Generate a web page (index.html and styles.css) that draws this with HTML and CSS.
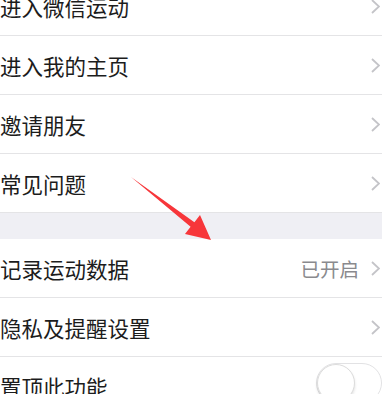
FILE: index.html
```html
<!DOCTYPE html>
<html>
<head>
<meta charset="utf-8">
<link rel="stylesheet" href="styles.css">
</head>
<body>
<div class="page">
<div class="group first">
<div class="row"><span class="label">进入微信运动</span><svg class="chevron" viewBox="0 0 9 15"><polyline points="1,1 8,7.5 1,14"/></svg></div>
<div class="row"><span class="label">进入我的主页</span><svg class="chevron" viewBox="0 0 9 15"><polyline points="1,1 8,7.5 1,14"/></svg></div>
<div class="row"><span class="label">邀请朋友</span><svg class="chevron" viewBox="0 0 9 15"><polyline points="1,1 8,7.5 1,14"/></svg></div>
<div class="row"><span class="label">常见问题</span><svg class="chevron" viewBox="0 0 9 15"><polyline points="1,1 8,7.5 1,14"/></svg></div>
</div>
<div class="gap"></div>
<div class="group">
<div class="row"><span class="label">记录运动数据</span><span class="value">已开启</span><svg class="chevron" viewBox="0 0 9 15"><polyline points="1,1 8,7.5 1,14"/></svg></div>
<div class="row"><span class="label">隐私及提醒设置</span><svg class="chevron" viewBox="0 0 9 15"><polyline points="1,1 8,7.5 1,14"/></svg></div>
<div class="row"><span class="label">置顶此功能</span><div class="switch"><div class="knob"></div></div></div>
</div>
</div>

<!-- 标注箭头 -->
<svg class="arrow" viewBox="0 0 382 394">
<polygon points="131,177 194.4,222.2 200,215 211,240 185,234 190.6,226.8"/>
</svg>
</body>
</html>
```

FILE: styles.css
```css
body {
margin: 0;
background: #fff;
overflow: hidden;
font-family: "Noto Sans CJK SC", "Noto Sans", sans-serif;
}

.page {
width: 382px;
height: 394px;
overflow: hidden;
}

.group.first {
margin-top: -23px;
}

.row {
display: flex;
align-items: center;
height: 58px;
border-bottom: 1px solid #e4e4e6;
padding-right: 2px;
}

.group .row:last-child {
border-bottom: none;
}

.group.first .row:last-child {
border-bottom: 1px solid #e4e4e6;
}

.label {
flex: 1;
font-size: 21.5px;
color: #1c1c1c;
}

.value {
font-size: 19.5px;
color: #8a8a8e;
margin-right: 12px;
}

.chevron {
width: 9px;
height: 15px;
fill: none;
stroke: #c4c4c8;
stroke-width: 1.8;
}

.gap {
height: 26px;
background: #efeff4;
}

.switch {
width: 66px;
height: 40px;
box-sizing: border-box;
border: 1.5px solid #e2e2e4;
border-radius: 20px;
margin-right: -2px;
margin-bottom: 6px;
position: relative;
}

.knob {
width: 38px;
height: 38px;
box-sizing: border-box;
border-radius: 50%;
border: 1px solid #dcdcdc;
background: #fff;
box-shadow: 0 2px 3px rgba(0,0,0,0.12);
margin-top: -0.5px;
margin-left: -0.5px;
}

.arrow {
position: absolute;
left: 0;
top: 0;
width: 382px;
height: 394px;
fill: #f7363a;
}
```
